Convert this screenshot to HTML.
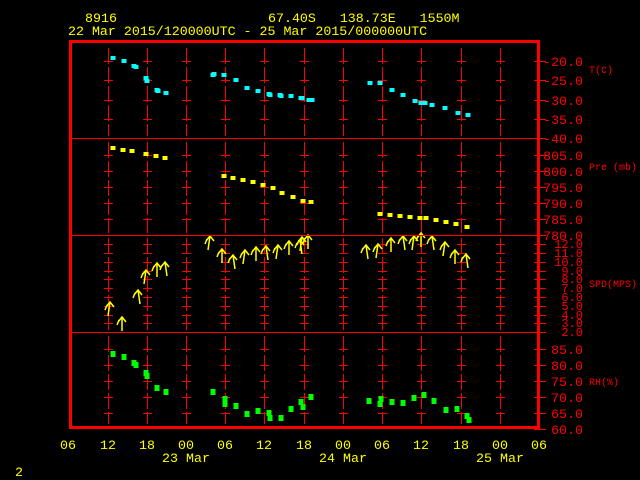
<!DOCTYPE html>
<html><head><meta charset="utf-8"><style>
html,body{margin:0;padding:0;background:#000;width:640px;height:480px;overflow:hidden}
svg{display:block}
text{font-family:"Liberation Mono",monospace;font-size:13.3px}
.y{fill:#ffff00}.r{fill:#ff0000}
.u{font-size:10px}
</style></head><body>
<svg id="s" width="640" height="480" viewBox="0 0 640 480" xmlns="http://www.w3.org/2000/svg">
<rect width="640" height="480" fill="#000"/>
<g id="grid" stroke="#ff0000" stroke-width="1" fill="none"></g>
<g id="data"></g>
<rect x="70.5" y="41.5" width="468" height="386" fill="none" stroke="#ff0000" stroke-width="3"/>
<line x1="70" y1="138.5" x2="538" y2="138.5" stroke="#ff0000"/>
<line x1="70" y1="235.5" x2="538" y2="235.5" stroke="#ff0000"/>
<line x1="70" y1="332.5" x2="538" y2="332.5" stroke="#ff0000"/>
<text class="y" x="85" y="22">8916</text>
<text class="y" x="268" y="22" xml:space="preserve">67.40S   138.73E   1550M</text>
<text class="y" x="68" y="35">22 Mar 2015/120000UTC - 25 Mar 2015/000000UTC</text>
<g class="r" text-anchor="end">
<text x="583" y="66">-20.0</text><text x="583" y="85">-25.0</text><text x="583" y="105">-30.0</text><text x="583" y="124">-35.0</text><text x="583" y="143">-40.0</text>
<text x="583" y="160">805.0</text><text x="583" y="176">800.0</text><text x="583" y="192">795.0</text><text x="583" y="208">790.0</text><text x="583" y="224">785.0</text><text x="583" y="240">780.0</text>
</g>
<g class="r" text-anchor="end" transform="translate(0,0)">
<text x="583" y="248" style="font-size:12px">12.0</text><text x="583" y="257" style="font-size:12px">11.0</text><text x="583" y="266" style="font-size:12px">10.0</text><text x="583" y="275" style="font-size:12px">9.0</text><text x="583" y="283" style="font-size:12px">8.0</text><text x="583" y="292" style="font-size:12px">7.0</text><text x="583" y="301" style="font-size:12px">6.0</text><text x="583" y="310" style="font-size:12px">5.0</text><text x="583" y="319" style="font-size:12px">4.0</text><text x="583" y="327" style="font-size:12px">3.0</text><text x="583" y="336" style="font-size:12px">2.0</text>
</g>
<g class="r" text-anchor="end">
<text x="583" y="354">85.0</text><text x="583" y="370">80.0</text><text x="583" y="386">75.0</text><text x="583" y="402">70.0</text><text x="583" y="418">65.0</text><text x="583" y="434">60.0</text>
</g>
<g class="r">
<text class="u" x="589" y="73">T(C)</text>
<text class="u" x="589" y="170">Pre (mb)</text>
<text class="u" x="589" y="287">SPD(MPS)</text>
<text class="u" x="589" y="385">RH(%)</text>
</g>
<g class="y" text-anchor="middle">
<text x="68" y="449">06</text><text x="108" y="449">12</text><text x="147" y="449">18</text><text x="186" y="449">00</text><text x="225" y="449">06</text><text x="264" y="449">12</text><text x="304" y="449">18</text><text x="343" y="449">00</text><text x="382" y="449">06</text><text x="421" y="449">12</text><text x="461" y="449">18</text><text x="500" y="449">00</text><text x="539" y="449">06</text>
<text x="186" y="462">23 Mar</text><text x="343" y="462">24 Mar</text><text x="500" y="462">25 Mar</text>
</g>
<text class="y" x="15" y="476">2</text>
</svg>
<script>
var NS="http://www.w3.org/2000/svg",g=document.getElementById('grid'),d=document.getElementById('data');
function el(p,t,a){var e=document.createElementNS(NS,t);for(var k in a)e.setAttribute(k,a[k]);p.appendChild(e);return e;}
var xs=[108,147,186,225,264,304,343,382,421,461,500];
var ys=[61,80,100,119,155,171,187,203,219,244,253,262,271,279,288,297,306,315,323,349,365,381,397,413];
var segs=[[48,136],[142,233],[238,330],[336,424]];
xs.forEach(function(x){segs.forEach(function(s){el(g,'line',{x1:x+.5,y1:s[0],x2:x+.5,y2:s[1],'stroke-dasharray':'16,3'});});
 ys.forEach(function(y){el(g,'line',{x1:x-4,y1:y+.5,x2:x+5,y2:y+.5});});});
[61,80,100,119,138,155,171,187,203,219,235,244,253,262,271,279,288,297,306,315,323,332,349,365,381,397,413,429].forEach(function(y){el(g,'line',{x1:534,y1:y+.5,x2:546,y2:y+.5});});
function sq(pts,c,w,h){pts.forEach(function(p){el(d,'rect',{x:p[0]-w/2,y:p[1]-h/2,width:w,height:h,fill:c});});}
sq([[113,58],[124,61],[134,66],[136,67],[146,78],[147,81],[157,90],[158,91],[166,93],[213,75],[214,74],[224,75],[236,80],[247,88],[258,91],[269,94],[270,95],[280,95],[281,96],[291,96],[301,98],[302,98],[309,100],[312,100],[370,83],[380,83],[392,90],[403,95],[415,101],[421,103],[425,103],[432,105],[445,108],[458,113],[468,115]],'#00ffff',5,4);
sq([[113,148],[123,150],[132,151],[146,154],[156,156],[165,158],[224,176],[233,178],[243,180],[253,182],[263,185],[273,188],[282,193],[293,197],[303,201],[311,202],[380,214],[390,215],[400,216],[410,217],[420,218],[426,218],[436,220],[446,222],[456,224],[467,227]],'#ffff00',5,4);
sq([[113,354],[124,357],[134,363],[136,365],[146,373],[147,376],[157,388],[166,392],[213,392],[225,399],[225,404],[236,406],[247,414],[258,411],[269,413],[270,418],[281,418],[291,409],[301,402],[303,407],[311,397],[369,401],[381,399],[380,404],[392,402],[403,403],[414,398],[424,395],[434,401],[446,410],[457,409],[467,416],[469,420]],'#00ff00',5,6);
var ar=[[110,302],[122,317],[138,290],[146,270],[157,263],[165,262],[210,236],[222,249],[233,255],[245,250],[256,247],[266,246],[278,245],[289,241],[300,240],[302,237],[308,235],[366,245],[378,244],[391,238],[403,236],[414,236],[421,233],[432,236],[445,242],[455,250],[466,254]];
ar.forEach(function(p,i){var x=p[0],y=p[1],dx=(i%3)-1;
 el(d,'path',{d:'M'+(x+dx*2)+' '+(y+14)+'L'+x+' '+y+'M'+(x-4)+' '+(y+5)+'L'+x+' '+y+'L'+(x+4)+' '+(y+5)+'M'+(x-3)+' '+(y+3)+'L'+(x-5)+' '+(y+8),stroke:'#ffff00','stroke-width':1.5,fill:'none'});});
</script>
</body></html>
